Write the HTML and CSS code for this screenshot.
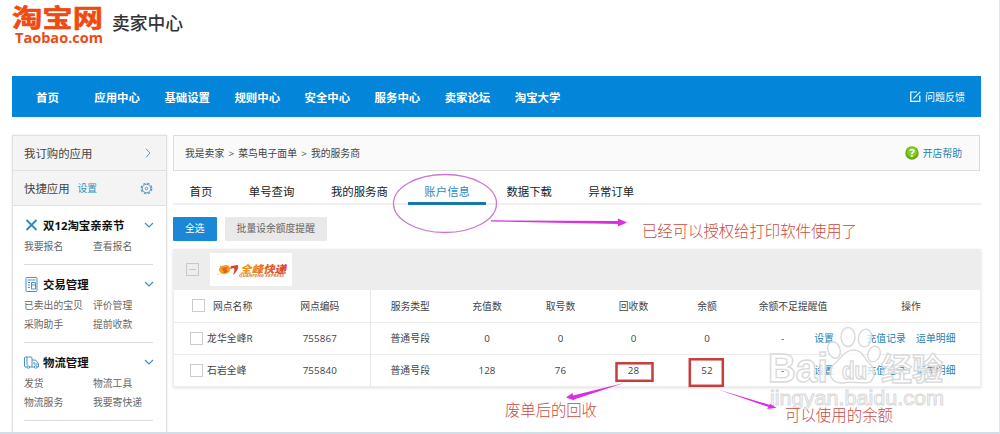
FILE: index.html
```html
<!DOCTYPE html>
<html lang="zh-CN">

<head>
    <meta charset="UTF-8">
    <title>卖家中心</title>
    <link rel="stylesheet" href="styles.css">
</head>

<body>
    <div class="page">
        <div class="header">
            <div class="logo">
                <svg width="96" height="46" viewBox="0 0 96 46">
                    <text class="logo-cn" x="0" y="29.500" textLength="91" lengthAdjust="spacingAndGlyphs" transform="scale(1 .88)">淘宝网</text>
                    <text class="logo-en" x="3" y="42" textLength="88" lengthAdjust="spacingAndGlyphs">Taobao.com</text>
                </svg>
            </div>
            <h1>卖家中心</h1>
        </div>

        <div class="nav">
            <a class="home">首页</a>
            <a>应用中心</a>
            <a>基础设置</a>
            <a>规则中心</a>
            <a>安全中心</a>
            <a>服务中心</a>
            <a>卖家论坛</a>
            <a>淘宝大学</a>
            <span class="feedback">
                <svg width="11" height="11" viewBox="0 0 11 11" fill="none" stroke="#fff" stroke-width="1.200"><path d="M7 1H.8v9.300h9V4.500M3.500 7.700L10.300.8" /></svg>
                问题反馈
            </span>
        </div>

        <div class="main">
            <div class="sidebar">
                <div class="side-row">
                    我订购的应用
                    <svg class="right" width="13" height="10" viewBox="0 0 13 10" fill="none" stroke="#5b9cc4"><path d="M6 .8L10 5 6 9.200" /></svg>
                </div>
                <div class="side-row">
                    快捷应用 <a class="set">设置</a>
                    <svg class="right" width="13" height="13" viewBox="0 0 13 13" fill="none" stroke="#5b9cc4">
                        <circle cx="6.500" cy="6.500" r="5.300" stroke-width="1.200" stroke-dasharray="2.600 1.560" />
                        <circle cx="6.500" cy="6.500" r="4.200" />
                        <circle cx="6.500" cy="6.500" r="1.300" />
                    </svg>
                </div>
                <div class="side-group">
                    <h3>
                        <svg class="icon" width="15" height="14" viewBox="0 0 15 14" fill="none" stroke="#2b86c6" stroke-width="1.800"><path d="M2.500 2l10 10M12.500 2l-10 10" /></svg>
                        双12淘宝亲亲节
                        <svg class="right" width="10" height="6" viewBox="0 0 10 6" fill="none" stroke="#3d8fbd" stroke-width="1.200"><path d="M1 1l4 4 4-4" /></svg>
                    </h3>
                    <div class="links"><a>我要报名</a><a>查看报名</a></div>
                </div>
                <div class="side-group">
                    <h3>
                        <svg class="icon" width="15" height="15" viewBox="0 0 15 15" fill="none" stroke="#4a93c4"><path d="M2 1.500q0-1 1-1h9q1 0 1 1v12q0 1-1 1H3q-1 0-1-1zM3.500 3h8M4 5.500h2M4 8h2M4 10.500h2M7.500 5.500h4v6.500h-4zM7.500 8h4" /></svg>
                        交易管理
                        <svg class="right" width="10" height="6" viewBox="0 0 10 6" fill="none" stroke="#3d8fbd" stroke-width="1.200"><path d="M1 1l4 4 4-4" /></svg>
                    </h3>
                    <div class="links"><a>已卖出的宝贝</a><a>评价管理</a><a>采购助手</a><a>提前收款</a></div>
                </div>
                <div class="side-group">
                    <h3>
                        <svg class="icon" width="15" height="13" viewBox="0 0 15 13" fill="none" stroke="#4a93c4"><path d="M3 11H1.500q-1 0-1-1V2q0-1 1-1H7q1 0 1 1v9H5.500M3 1v8M8 4h3.500l3 3.500V11H13M8 11h2.500M10 6v2h4" /><circle cx="4.300" cy="11" r="1.300" /><circle cx="11.700" cy="11" r="1.300" /></svg>
                        物流管理
                        <svg class="right" width="10" height="6" viewBox="0 0 10 6" fill="none" stroke="#3d8fbd" stroke-width="1.200"><path d="M1 1l4 4 4-4" /></svg>
                    </h3>
                    <div class="links"><a>发货</a><a>物流工具</a><a>物流服务</a><a>我要寄快递</a></div>
                </div>
            </div>

            <div class="content">
                <div class="crumb">
                    <span>我是卖家</span><i>&gt;</i><span>菜鸟电子面单</span><i>&gt;</i><span>我的服务商</span>
                    <a class="help">
                        <svg width="14" height="14" viewBox="0 0 14 14"><circle cx="7" cy="7" r="6.700" fill="#62b00c" /><circle cx="7" cy="6" r="5" fill="#8acb2c" /><text x="7" y="11" text-anchor="middle">?</text></svg>
                        开店帮助
                    </a>
                </div>

                <div class="tabs">
                    <a>首页</a>
                    <a>单号查询</a>
                    <a>我的服务商</a>
                    <a class="active">账户信息</a>
                    <a>数据下载</a>
                    <a>异常订单</a>
                </div>

                <div class="buttons">
                    <a class="btn btn-primary">全选</a>
                    <a class="btn">批量设余额度提醒</a>
                </div>

                <div class="panel">
                    <div class="panel-head">
                        <span class="minus"></span>
                        <div class="express">
                            <svg width="82" height="33" viewBox="0 0 82 33">
                                <defs>
                                    <linearGradient id="fire"><stop offset="0" stop-color="#f2a21c" /><stop offset="1" stop-color="#dc3b2a" /></linearGradient>
                                </defs>
                                <path d="M7 21l4-1q-4-4-1-5-1-3 2-2 5-2 7 0 3 4-1 7-4 2-8 0l-3 2z" fill="#f2a01e" />
                                <path d="M12 15l6-1-2 3 2 1q0 2-5 2 2-2 0-2z" fill="#e2631c" />
                                <path d="M21 13l7-1q1 5-5 10 2-5 1-7l-4 1z" fill="#d9432a" />
                                <text class="ex-cn" x="30" y="20" textLength="46" lengthAdjust="spacingAndGlyphs" fill="url(#fire)">全峰快递</text>
                                <text class="ex-en" x="29" y="23.500" textLength="45" lengthAdjust="spacingAndGlyphs">QUANFENG EXPRESS</text>
                            </svg>
                        </div>
                    </div>
                    <table>
                        <colgroup>
                            <col class="c1"><col class="c2"><col class="c3"><col class="c4"><col class="c5"><col class="c5"><col class="c4"><col class="c8"><col>
                        </colgroup>
                        <tr>
                            <th><div class="name"><span class="check"></span>网点名称</div></th>
                            <th class="line">网点编码</th>
                            <th>服务类型</th>
                            <th>充值数</th>
                            <th>取号数</th>
                            <th>回收数</th>
                            <th>余额</th>
                            <th>余额不足提醒值</th>
                            <th>操作</th>
                        </tr>
                        <tr>
                            <td><div class="name"><span class="check"></span>龙华全峰R</div></td>
                            <td class="line">755867</td>
                            <td>普通号段</td>
                            <td>0</td>
                            <td>0</td>
                            <td>0</td>
                            <td>0</td>
                            <td class="remind">-<a>设置</a></td>
                            <td><a>充值记录</a><a>运单明细</a></td>
                        </tr>
                        <tr>
                            <td><div class="name"><span class="check"></span>石岩全峰</div></td>
                            <td class="line">755840</td>
                            <td>普通号段</td>
                            <td>128</td>
                            <td>76</td>
                            <td>28</td>
                            <td>52</td>
                            <td class="remind">-<a>设置</a></td>
                            <td><a>充值记录</a><a>运单明细</a></td>
                        </tr>
                    </table>
                </div>
            </div>
        </div>

        <!-- 水印 -->
        <svg class="overlay watermark" width="1000" height="434" viewBox="0 0 1000 434">
            <g>
                <ellipse cx="848" cy="337" rx="7" ry="9.500" />
                <ellipse cx="865" cy="338" rx="6.500" ry="9" transform="rotate(12 865 338)" />
                <ellipse cx="834" cy="350" rx="6" ry="8.500" transform="rotate(-20 834 350)" />
                <ellipse cx="874" cy="354" rx="6" ry="8" transform="rotate(20 874 354)" />
                <path d="M854 350c9 0 10 9 16 14 7 6 5 19-5 19-6 0-16-2-22 0-13 1-16-12-9-19 7-5 10-14 20-14z" />
                <text class="wm-big" x="768" y="382" textLength="60" lengthAdjust="spacingAndGlyphs">Bai</text>
                <text class="wm-du" x="842" y="379" textLength="25" lengthAdjust="spacingAndGlyphs">du</text>
                <text class="wm-cn" x="881" y="380" textLength="62" lengthAdjust="spacingAndGlyphs">经验</text>
                <text class="wm-url" x="770" y="405" textLength="174" lengthAdjust="spacingAndGlyphs">jingyan.baidu.com</text>
            </g>
        </svg>

        <!-- 标注 -->
        <svg class="overlay" width="1000" height="434" viewBox="0 0 1000 434">
            <ellipse cx="445" cy="203.500" rx="51.500" ry="29" fill="none" stroke="#cc78d4" stroke-width="1.300" />
            <g fill="#dc2ee0">
                <path d="M491 220.300L618 221V218.500L627 222.500 618 226.500V224L491 221.500z" />
                <path d="M624 383L574 399.500 574.500 400.500 566 397.500 572.500 393 573 395.500z" />
                <path d="M718 389.500L770 405 769.500 403.500 776.500 407.800 767 409 768.500 407z" />
            </g>
            <g fill="none" stroke="#c93c3c" stroke-width="2.500">
                <rect x="616.500" y="363.300" width="36" height="17.500" />
                <rect x="689.800" y="359.300" width="33" height="26.500" />
            </g>
            <g class="note">
                <text x="642" y="237" textLength="215">已经可以授权给打印软件使用了</text>
                <text x="505" y="415.500" textLength="92">废单后的回收</text>
                <text x="785" y="420.500" textLength="108">可以使用的余额</text>
            </g>
        </svg>
    </div>
</body>

</html>
```

FILE: styles.css
```css
* {
    box-sizing: border-box;
    margin: 0;
    padding: 0;
}

body {
    font-family: "Open Sans", "Noto Sans CJK SC", sans-serif;
    font-size: 9.8px;
    color: #444;
    background: #fff;
}

.page {
    position: relative;
    width: 1000px;
    height: 434px;
    padding: 0 18px 0 12px;
    overflow: hidden;
    border-right: 1px solid #dfeaf0;
    border-bottom: 2px solid #d3dfe6;
}

.header {
    display: flex;
    height: 76px;
}

.logo {
    width: 100px;
    padding-top: 1px;
}

.logo svg {
    overflow: visible;
}

.logo-cn {
    font: bold 28px "Noto Sans CJK SC", sans-serif;
    fill: #ee4a12;
    stroke: #ee4a12;
    stroke-width: .6px;
    stroke-linejoin: round;
}

.logo-en {
    font: bold 15px "Open Sans", sans-serif;
    fill: #ee4a12;
}

.header h1 {
    padding-top: 10px;
    font-size: 17.8px;
    line-height: 27px;
    font-weight: 500;
    color: #333;
}

/* 导航 */
.nav {
    display: flex;
    align-items: center;
    gap: 24.5px;
    width: 969px;
    height: 41px;
    padding: 0 16px 0 24px;
    background: #0385d9;
    color: #fff;
    font-size: 11.4px;
    font-weight: bold;
}

.nav .home {
    margin-right: 11px;
}

.feedback {
    display: flex;
    align-items: center;
    gap: 4px;
    margin-left: auto;
    font-size: 10px;
    font-weight: normal;
}

.main {
    display: flex;
    gap: 6px;
    padding-top: 18px;
}

/* 左侧菜单 */
.sidebar {
    width: 155px;
    height: 300px;
    flex: none;
    border: 1px solid #e0e0e0;
    box-shadow: 0 0 2px #e4e4e4;
}

.side-row {
    display: flex;
    align-items: center;
    height: 35px;
    padding: 0 13px 0 11px;
    background: #f4f4f4;
    border-bottom: 1px solid #e0e0e0;
    font-size: 11.4px;
}

.set {
    margin-left: 8px;
    font-size: 9.8px;
    color: #2f8fc0;
}

.right {
    margin-left: auto;
}

.side-group {
    margin: 0 13px 0 11px;
    padding: 11px 0 8px;
    border-bottom: 1px solid #dcdcdc;
}

.side-group h3 {
    display: flex;
    align-items: center;
    height: 16px;
    margin-bottom: 4px;
    font-size: 11.4px;
    color: #111;
}

.side-group .icon {
    margin-right: 4px;
}

.side-group .right {
    margin-right: -1px;
}

.links {
    display: grid;
    grid-template-columns: 69px 1fr;
    line-height: 19px;
    color: #666;
    white-space: nowrap;
}

/* 右侧内容 */
.content {
    width: 808px;
    flex: none;
}

.crumb {
    display: flex;
    align-items: center;
    width: 807px;
    height: 36px;
    padding: 0 17px 0 11px;
    background: #fafafa;
    border: 1px solid #ddd;
}

.crumb i {
    width: 14px;
    text-align: center;
    font-style: normal;
}

.help {
    display: flex;
    align-items: center;
    gap: 4px;
    margin-left: auto;
    color: #2580b0;
}

.help text {
    font: bold 11px "Open Sans", sans-serif;
    fill: #fff;
}

.tabs {
    display: flex;
    gap: 3.5px;
    height: 34px;
    border-bottom: 2px solid #f0f0f0;
    font-size: 11.4px;
    line-height: 16px;
    color: #222;
}

.tabs a {
    height: 34px;
    padding: 13px 16.5px 0;
}

.tabs .active {
    border-bottom: 3px solid #1678b0;
    color: #2a8cc8;
}

.buttons {
    display: flex;
    gap: 8px;
    padding: 12px 0 8px;
}

.btn {
    height: 24px;
    padding: 0 12px;
    border-radius: 1px;
    background: #e9e9e9;
    line-height: 24px;
    color: #666;
}

.btn-primary {
    background: #1a87d7;
    color: #fff;
}

.panel {
    border: 1px solid #eee;
    border-top: 0;
    box-shadow: 0 1px 3px #ddd;
}

.panel-head {
    display: flex;
    align-items: center;
    height: 41px;
    padding-left: 12px;
    background: #ededed;
}

.minus {
    display: flex;
    align-items: center;
    width: 13px;
    height: 13px;
    margin-right: 11px;
    border: 1px solid #c8c8c8;
}

.minus::after {
    content: "";
    width: 7px;
    height: 1px;
    margin: auto;
    background: #c8c8c8;
}

.express {
    height: 33px;
    background: #fff;
}

.ex-cn {
    font: italic 900 10.5px "Noto Sans CJK SC", sans-serif;
}

.ex-en {
    font: italic bold 3.5px "Open Sans", sans-serif;
    fill: #e07a3a;
}

table {
    width: 100%;
    table-layout: fixed;
    border-collapse: collapse;
}

.c1 { width: 96px; }
.c2 { width: 100px; }
.c3 { width: 80px; }
.c4 { width: 74px; }
.c5 { width: 73px; }
.c8 { width: 98px; }

th,
td {
    height: 32px;
    border-bottom: 1px solid #ececec;
    text-align: center;
    font-weight: normal;
    white-space: nowrap;
}

td {
    letter-spacing: .1px;
}

tr:last-child td {
    border-bottom: 0;
}

.name {
    display: flex;
    align-items: center;
    padding-left: 16px;
}

th .name {
    padding-left: 18px;
}

.line {
    border-right: 1px solid #e6e6e6;
}

.check {
    width: 13px;
    height: 13px;
    margin-right: 4px;
    border: 1px solid #ccc;
    background: #fff;
}

th .check {
    margin-right: 8px;
}

td a {
    color: #2580b0;
}

td a + a {
    margin-left: 10px;
}

td.remind {
    padding-right: 8px;
    text-align: right;
}

.remind a {
    margin-left: 30px;
}

/* 浮层 */
.overlay {
    position: absolute;
    top: 0;
    left: 0;
}

.note text {
    font: 300 15.4px "Noto Sans CJK SC", sans-serif;
    fill: #c94a42;
}

.watermark g {
    fill: rgba(255, 255, 255, .75);
    stroke: #dadada;
    stroke-width: 1.4px;
}

.wm-big {
    font: bold 40px "Liberation Sans", sans-serif;
}

.wm-du {
    font: bold 23px "Liberation Sans", sans-serif;
}

.wm-cn {
    font: bold 31px "Noto Sans CJK SC", sans-serif;
}

.wm-url {
    font: 20px "Liberation Sans", sans-serif;
    stroke-width: 1px;
}
```
